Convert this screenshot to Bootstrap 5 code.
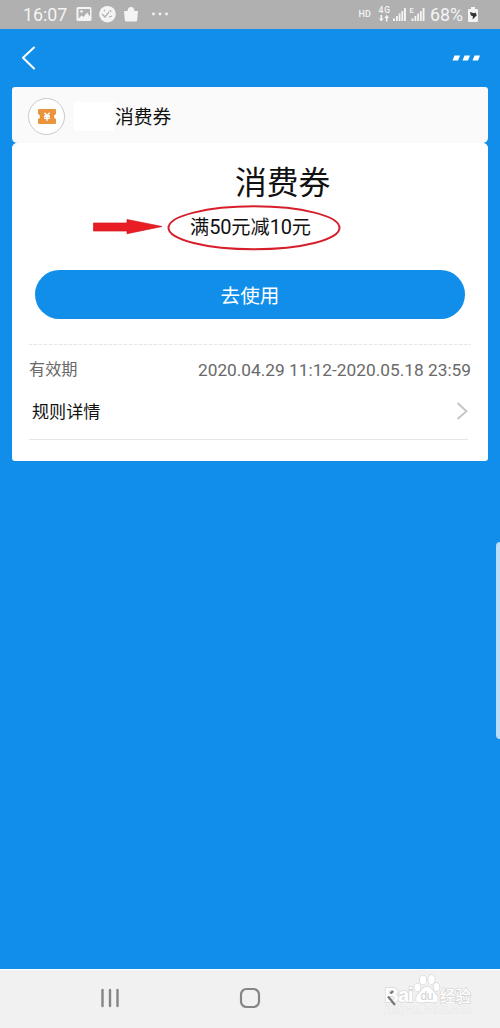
<!DOCTYPE html>
<html lang="zh-CN">
<head>
<meta charset="utf-8">
<meta name="viewport" content="width=device-width, initial-scale=1">
<title>消费券</title>
<link href="https://cdn.jsdelivr.net/npm/bootstrap@5.3.0/dist/css/bootstrap.min.css" rel="stylesheet">
<style>
  body { font-family: Roboto, "Noto Sans CJK SC", sans-serif; background: #118eea; color: #111; height: 1028px; overflow: hidden; line-height: 1; }
  svg { display: block; flex: none; }
  .status-bar { height: 29px; background: #b0b0b0; color: #f4f4f4; padding: 0 21px 0 23px; }
  .clock { font-size: 17.8px; width: 53px; padding-top: 1px; }
  .battery-text { font-size: 17.8px; width: 38px; padding-top: 1px; }
  .title-bar { height: 58px; padding: 0 19px 0 21px; }
  .coupon { margin: 0 12px; height: 374px; }
  .coupon-head { height: 56px; background: #fafafa; border-radius: 3px 3px 5px 5px; padding: 2px 0 0 16px; }
  .coupon-main { height: 318px; background: #fff; border-radius: 5px 5px 3px 3px; padding: 0 17px; }
  .logo-ring { width: 37px; height: 37px; border: 1px solid #c9c9ce; background: #fff; }
  .blank-name { width: 40px; height: 29px; background: #fff; margin: 0 1px 0 9px; }
  .shop { font-size: 18.8px; }
  .coupon-title { font-size: 31.8px; font-weight: 400; line-height: 40px; margin: 0; padding: 20px 0 0 206px; height: 62px; }
  .offer-row { height: 47px; padding-left: 64px; }
  .offer { width: 174px; height: 47px; font-size: 19.2px; margin-left: 4px; }
  .offer-text { line-height: 24px; padding: 10px 0 0 23px; white-space: nowrap; }
  .offer-text span { font-size: 20px; letter-spacing: -.2px; }
  .use-btn, .use-btn:hover { height: 49px; margin: 18px 6px 0; background: #118eea; color: #fff; border: 0; font-size: 19.6px; line-height: 49px; padding: 2px 0 0; }
  .dash-line { margin-top: 25px; height: 1px; background: repeating-linear-gradient(90deg, #e6e6e6 0 3px, #f8f8f8 3px 5px); }
  .valid-row { height: 51px; color: #696969; font-size: 16.2px; }
  .valid-date { font-size: 17.3px; white-space: nowrap; }
  .rule-row { height: 44px; margin: 0 3px 0 0; padding: 0 0 13px 3px; font-size: 17.1px; border-bottom: 1px solid #e6e6e6; }
  .edge-handle { right: 0; top: 542px; width: 4px; height: 197px; background: #b9defb; border-radius: 5px 0 0 5px; }
  .nav-keys { height: 59px; background: #f1f1f1; border-top: 1px solid #fff; }
  .nav-keys svg { width: 500px; height: 58px; }
</style>
</head>
<body class="d-flex flex-column position-relative">
<header class="status-bar d-flex align-items-center">
  <span class="clock">16:07</span>
  <svg width="98" height="29" viewBox="76 0 98 29" fill="#f4f4f4">
    <path fill-rule="evenodd" d="M78 7h12q1.500 0 1.500 1.500v11q0 1.500-1.500 1.500h-12q-1.500 0-1.500-1.500v-11q0-1.500 1.500-1.500zM78.500 9v9.500l3-3 2 1.500 3.500-4.500 3 4v-7.500z"/>
    <circle cx="81.500" cy="11.500" r="1.300"/>
    <circle cx="107.500" cy="14.200" r="8.300"/>
    <path d="M102 14l3 3 4-5M109 17l3-1M110 10l1 2M105 11l-1-1" fill="none" stroke="#b0b0b0" stroke-width="1.300"/>
    <path d="M124 11h14l-.8 9q-.2 1.500-1.700 1.500h-9q-1.500 0-1.700-1.500z"/>
    <path d="M127.500 11.500q0-4.500 3.500-4.500t3.500 4.500z"/>
    <circle cx="153.500" cy="14" r="1.400"/><circle cx="160" cy="14" r="1.400"/><circle cx="166.500" cy="14" r="1.400"/>
  </svg>
  <svg class="ms-auto" width="72" height="29" viewBox="358 0 72 29" fill="#f4f4f4" font-family="Roboto" font-weight="500">
    <text x="358.500" y="17" font-size="9" textLength="12.500">HD</text>
    <text x="378.500" y="13.200" font-size="8.500" textLength="11.500">4G</text>
    <path d="M380.500 15h1.600v3.500h1.700l-2.500 3-2.500-3h1.700zM385.900 21.500h1.600V18h1.700l-2.500-3-2.500 3h1.700z"/>
    <path d="M393 18.500h2v2.500h-2zM396 16h1.800v5H396zM398.700 13.500h1.800v7.500h-1.800zM401.400 11h1.800v10h-1.800zM404 8h1.900v13H404z"/>
    <text x="409.500" y="12.700" font-size="7.500">E</text>
    <path d="M411.500 18.500h2v2.500h-2zM414.500 16h1.800v5h-1.800zM417.200 13.500h1.800v7.500h-1.800zM419.900 11h1.800v10h-1.800zM422.600 8h1.900v13h-1.900z"/>
  </svg>
  <span class="battery-text">68%</span>
  <svg width="11" height="29" viewBox="468 0 11 29">
    <path d="M471 7h4v2h2q1 0 1 1v11q0 1-1 1h-8q-1 0-1-1V10q0-1 1-1h2z" fill="#f4f4f4"/>
    <path d="M470 12l4 1.200 1.500-.7 1.300 2.700-4.200 4.300.3-3.300-2-.7z" fill="#333"/>
  </svg>
</header>
<nav class="title-bar d-flex align-items-center justify-content-between">
  <svg width="16" height="26" viewBox="0 0 16 26" fill="none" stroke="#fff" stroke-width="2" stroke-linecap="round" stroke-linejoin="round"><path d="M13 2.500L2 12.800 13 23.500"/></svg>
  <svg width="30" height="8" viewBox="0 0 30 8" fill="#fff"><path d="M3.500 1.500h5.500L7 6.500H1.500zM13.500 1.500H19l-2 5h-5.500zM23.500 1.500H29l-2 5h-5.500z"/></svg>
</nav>
<main class="coupon">
  <div class="coupon-head d-flex align-items-center">
    <div class="logo-ring rounded-circle d-flex align-items-center justify-content-center">
      <svg width="18" height="15" viewBox="0 0 18 15"><path d="M1 0h16q1 0 1 1v4q-2 .5-2 2.500t2 2.500v4q0 1-1 1H1q-1 0-1-1v-4q2-.5 2-2.500T0 5V1q0-1 1-1z" fill="#eb943d"/><path d="M6.500 3.800L9 7l2.500-3.200M6 7.200h6M6 9.300h6M9 7v4.700" fill="none" stroke="#fff" stroke-width="1.500"/></svg>
    </div>
    <span class="blank-name"></span>
    <span class="shop pt-1">消费券</span>
  </div>
  <section class="coupon-main">
    <h1 class="coupon-title">消费券</h1>
    <div class="offer-row d-flex">
      <svg width="70" height="47" viewBox="0 0 70 47"><path d="M.5 18H34V14.500L69 21.500 34 28.700V26H.5z" fill="#e91e25" stroke="#d4161d" stroke-width=".7"/></svg>
      <div class="offer position-relative">
        <svg class="position-absolute top-0 start-0" width="174" height="47" viewBox="0 0 174 47"><ellipse cx="87" cy="22.800" rx="85.500" ry="21.500" fill="none" stroke="#d61f2b" stroke-width="2"/></svg>
        <div class="offer-text">满<span>50</span>元减<span>10</span>元</div>
      </div>
    </div>
    <div class="d-grid"><button type="button" class="btn use-btn rounded-pill">去使用</button></div>
    <div class="dash-line"></div>
    <div class="valid-row d-flex align-items-center justify-content-between"><span>有效期</span><span class="valid-date">2020.04.29 11:12-2020.05.18 23:59</span></div>
    <div class="rule-row d-flex align-items-center justify-content-between"><span class="pt-1">规则详情</span>
      <svg width="12" height="18" viewBox="0 0 12 18" fill="none" stroke="#c3c3c3" stroke-width="1.800"><path d="M1.500 1L10.500 9.300 1.500 17"/></svg>
    </div>
  </section>
</main>
<div class="edge-handle position-absolute"></div>
<footer class="nav-keys mt-auto">
  <svg viewBox="0 970 500 58">
    <path d="M102.500 990v16M110 990v16M117.500 990v16" fill="none" stroke="#858585" stroke-width="2.400" stroke-linecap="round"/>
    <rect x="241" y="989" width="18" height="18" rx="5.500" fill="none" stroke="#858585" stroke-width="2.200"/>
    <g fill="#fff" stroke="#d6d6d6" stroke-width="1.400" paint-order="stroke">
      <text x="384.500" y="1001.500" font-family="Liberation Sans, sans-serif" font-weight="700" font-size="20" textLength="29">Bai</text>
      <ellipse cx="417.500" cy="987.500" rx="3" ry="4"/><ellipse cx="423" cy="980" rx="3.200" ry="4.500"/><ellipse cx="431.500" cy="979.500" rx="3.200" ry="4.500"/><ellipse cx="436.500" cy="987" rx="3" ry="4"/>
      <path d="M427 986.500q3 0 5.500 4l4.500 5q3 6.500-3 7-3.500 0-7-.8-3.500.8-7 .8-6-.5-3-7l4.500-5q2.500-4 5.500-4z"/>
      <text x="420.500" y="1000" font-family="Liberation Sans, sans-serif" font-size="12" textLength="13" fill="#d0d0d0" stroke="none">du</text>
      <text x="440" y="1001.500" font-family="Noto Sans CJK SC, sans-serif" font-weight="500" font-size="15.500" textLength="31">经验</text>
      <text x="385" y="1013" font-family="Liberation Sans, sans-serif" font-size="10" textLength="86" fill="#f8f8f8" stroke="#e4e4e4" stroke-width=".8">jingyan.baidu.com</text>
    </g>
    <path d="M393 991l-2.500 2.500M388 996.500l7 8.500" fill="none" stroke="#777" stroke-width="2.200"/>
  </svg>
</footer>
<script src="https://cdn.jsdelivr.net/npm/bootstrap@5.3.0/dist/js/bootstrap.bundle.min.js"></script>
</body>
</html>
